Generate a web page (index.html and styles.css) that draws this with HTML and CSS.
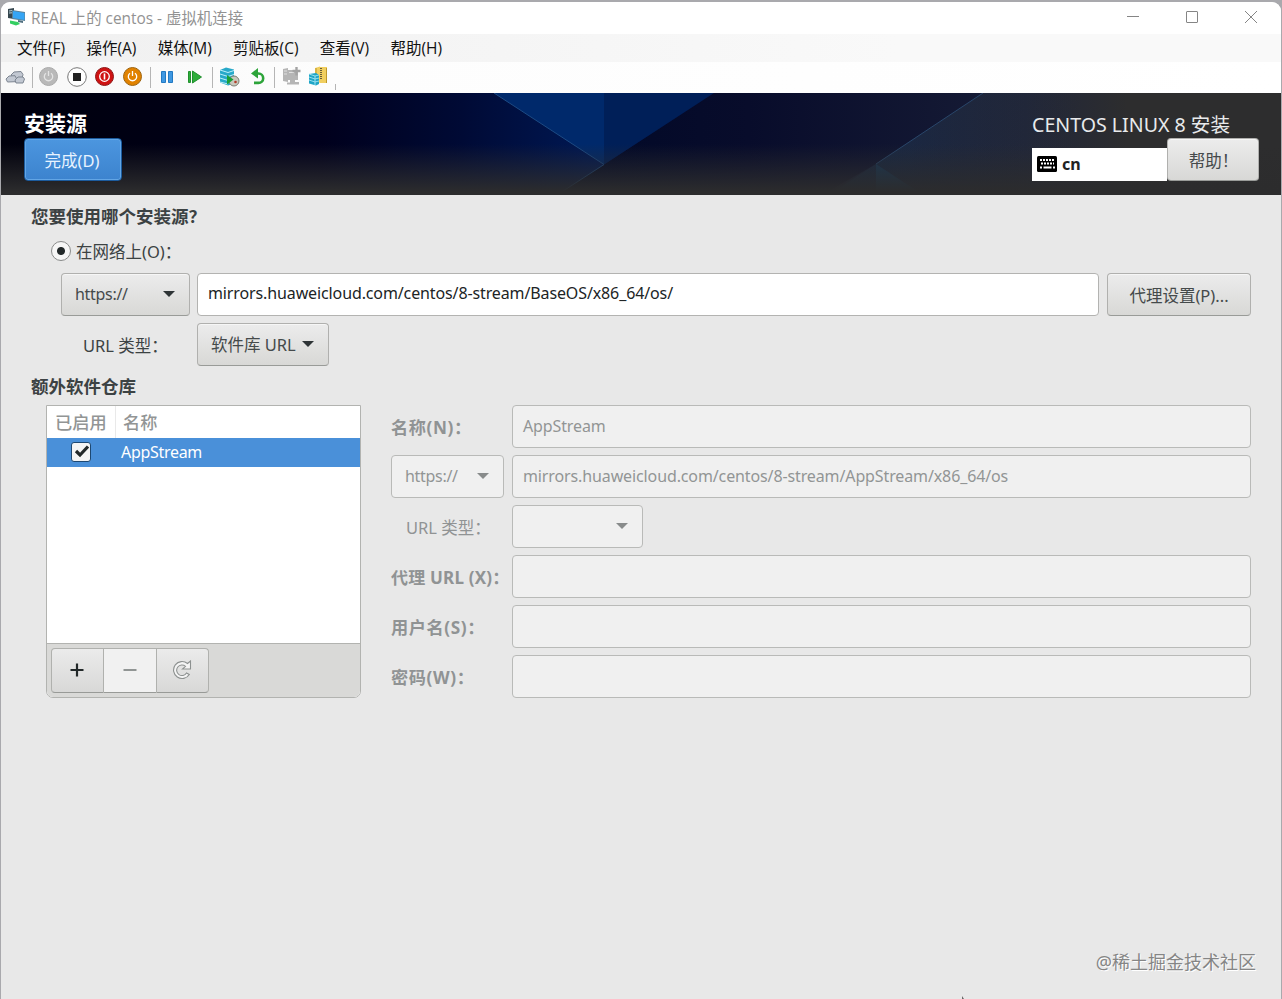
FILE: index.html
```html
<!DOCTYPE html>
<html lang="zh-CN">
<head>
    <meta charset="UTF-8">
    <meta name="viewport" content="width=device-width, initial-scale=1.0">
    <title>REAL 上的 centos - 虚拟机连接</title>
    <link rel="stylesheet" href="styles.css">
</head>
<body>
    <div class="window">
        <div class="titlebar">
            <svg class="app-icon" width="18" height="18" viewBox="0 0 18 18">
                <path d="M0 1l6-1v11l-6-1z" fill="#37474f"/>
                <path d="M1 3l3-.4M1 5l3-.2" stroke="#b8d4de"/>
                <path d="M4 2l13 2v9L4 11z" fill="#5a8299"/>
                <path d="M5 3l11.500 2v7L5 10z" fill="#35a5f5"/>
                <path d="M10 12l5 1v2l-5-1z" fill="#527080"/>
                <path d="M2 12.500l8 1.500 2 2-4 1.500-6-2z" fill="#35cf62"/>
            </svg>
            <span class="title-text">REAL 上的 centos - 虚拟机连接</span>
            <div class="window-buttons">
                <svg width="12" height="12" viewBox="0 0 12 12"><path d="M0 5.500h12"/></svg>
                <svg width="12" height="12" viewBox="0 0 12 12"><rect x=".5" y=".5" width="11" height="11" rx=".5"/></svg>
                <svg width="12" height="12" viewBox="0 0 12 12"><path d="M0 0l12 12M12 0L0 12"/></svg>
            </div>
        </div>

        <div class="menubar">
            <span>文件(F)</span>
            <span>操作(A)</span>
            <span>媒体(M)</span>
            <span>剪贴板(C)</span>
            <span>查看(V)</span>
            <span>帮助(H)</span>
        </div>

        <div class="toolbar">
            <svg width="335" height="31" viewBox="0 0 335 31">
                <!-- Ctrl+Alt+Del -->
                <g fill="#c2c8d2" stroke="#7d8591">
                    <path d="M10 13l3-3 7-.5 2 3-1 4-8 .5z"/>
                    <path d="M5 17l3-3 6-.3 1.500 3-1 3-8 .3z"/>
                    <path d="M14 18l3-3 5 0 1.500 2-1.500 4-7 0z"/>
                </g>
                <g stroke="#b5b5b5">
                    <path d="M31.500 5v21M149.500 5v21M211.500 5v21M273.500 5v21"/>
                    <path d="M334.500 22v6"/>
                </g>
                <!-- power buttons -->
                <circle cx="47.500" cy="14.500" r="9" fill="#b9b9b9" stroke="#aaa"/>
                <circle cx="76" cy="15" r="9.300" fill="#fff" stroke="#777"/>
                <rect x="72" y="11" width="8" height="8" fill="#222"/>
                <circle cx="103.500" cy="14.500" r="9" fill="#cf1212" stroke="#8e1717"/>
                <circle cx="131.500" cy="14.500" r="9" fill="#e18200" stroke="#9e640f"/>
                <g fill="none" stroke="#fff" stroke-width="1.300">
                    <path d="M45 11.200a4.200 4.200 0 1 0 5 0M47.500 9v5" stroke="#e4e4e4"/>
                    <circle cx="103.500" cy="14.500" r="4.800"/>
                    <path d="M103.500 11.500v6" stroke-width="1.600"/>
                    <path d="M129 11.200a4.200 4.200 0 1 0 5 0M131.500 9v5"/>
                </g>
                <!-- pause, resume -->
                <path d="M160.500 9.500h4v11h-4zM167.500 9.500h4v11h-4z" fill="#3f98e2" stroke="#2279c2"/>
                <path d="M187.500 9.500h2v11h-2zM191.500 9l9 6-9 6z" fill="#2eae3b" stroke="#21902e"/>
                <!-- checkpoint, revert -->
                <path d="M219 8l6-2.500 8 2v14l-6 2-8-3z" fill="#28a9c9"/>
                <path d="M219 8l8 2.500 6-2M219 12l8 2.500 6-2M219 16l8 2.500 6-2M219 20l8 2" fill="none" stroke="#bdeffa"/>
                <circle cx="233" cy="19" r="5" fill="#c8c8bd" stroke="#7b7e73"/>
                <path d="M226 13l6.500 4.500-6.500 5z" fill="#19a036"/>
                <circle cx="234.500" cy="20" r="1.300" fill="#b33d28"/>
                <path d="M255 11.500h2.500a4.700 4.700 0 0 1 0 9.400H253" fill="none" stroke="#2da43a" stroke-width="2.600"/>
                <path d="M250 11.500l7-5.500v10.500z" fill="#2da43a"/>
                <!-- enhanced session, share -->
                <path d="M282 7l5-1v14l-5-1zM286 8h11v10h-11zM289 18h5v2h4v2.500h-12v-2h3z" fill="#b5b5b5"/>
                <path d="M283 9h3M283 12h3M288 10.500h5" stroke="#e0e0e0"/>
                <path d="M295.500 5v8.500M291.500 9h8" stroke="#a3a3a3" stroke-width="2.400"/>
                <path d="M314 6l5-1.500v16l-5 1zM319 5h7v16h-7z" fill="#f1cf60"/>
                <path d="M315 6v15M325.500 6v15" stroke="#bd982c"/>
                <path d="M320 6v11" stroke="#685c39" stroke-width="2" stroke-dasharray="1 1"/>
                <path d="M308 12l7-1 3 2v9l-3 1.500-7-2z" fill="#1fa5c7"/>
                <path d="M308 12l6 2 4-1M308 15l6 2 4-1M308 18l6 2 4-1M314 14v9" fill="none" stroke="#b1ecf6" stroke-width=".8"/>
            </svg>
        </div>

        <div class="banner">
            <svg class="banner-art" viewBox="0 0 1280 102" width="1280" height="102">
                <defs>
                    <linearGradient id="base">
                        <stop offset="0" stop-color="#00000c"/>
                        <stop offset=".25" stop-color="#00001c"/>
                        <stop offset=".36" stop-color="#000a35"/>
                        <stop offset=".47" stop-color="#001955"/>
                        <stop offset=".55" stop-color="#060b2c"/>
                        <stop offset=".6" stop-color="#121731"/>
                        <stop offset=".7" stop-color="#182140"/>
                        <stop offset=".8" stop-color="#20263a"/>
                        <stop offset=".88" stop-color="#2d2d2e"/>
                    </linearGradient>
                    <linearGradient id="dark">
                        <stop offset="0" stop-color="#000827"/>
                        <stop offset=".45" stop-color="#080c2b"/>
                        <stop offset="1" stop-color="#151a34"/>
                    </linearGradient>
                    <linearGradient id="fade" x2="0" y2="1">
                        <stop offset=".5" stop-color="#2c2c2d" stop-opacity="0"/>
                        <stop offset=".97" stop-color="#2c2c2d"/>
                    </linearGradient>
                    <linearGradient id="side">
                        <stop offset="0" stop-color="#14304f"/>
                        <stop offset="1" stop-color="#2d2d2e" stop-opacity="0"/>
                    </linearGradient>
                </defs>
                <path d="M0 0h1280v102H0z" fill="url(#base)"/>
                <path d="M713 0L603 71.500 556 102h265L875 71 982 0z" fill="url(#dark)"/>
                <path d="M493 0h110v71.500z" fill="#00296b"/>
                <path d="M603 0h110L603 71.500z" fill="#001f58"/>
                <path d="M493 0l110 71.500L556 102" fill="none" stroke="#1c4b84"/>
                <path d="M982 0L875 71l-55 36h260V0z" fill="url(#side)" opacity=".65"/>
                <path d="M982 0L875 71" stroke="#29466a"/>
                <path d="M875 71l55 36h-55z" fill="#174268" opacity=".6"/>
                <path d="M0 0h1280v102H0z" fill="url(#fade)"/>
            </svg>
            <div class="banner-left">
                <div class="spoke-title">安装源</div>
                <button class="btn btn-done">完成(D)</button>
            </div>
            <div class="banner-right">
                <div class="product">CENTOS LINUX 8 安装</div>
                <div class="banner-controls">
                    <div class="keyboard">
                        <svg width="20" height="16" viewBox="0 0 20 16">
                            <rect width="20" height="16" rx="1.500"/>
                            <path d="M3 4h14M4 7.500h13" stroke="#fff" stroke-width="2" stroke-dasharray="2 1"/>
                            <path d="M3 11.500h2M6.500 11.500h8M16 11.500h2" stroke="#fff" stroke-width="2"/>
                        </svg>
                        <span>cn</span>
                    </div>
                    <button class="btn btn-help">帮助！</button>
                </div>
            </div>
        </div>

        <div class="content">
            <h2>您要使用哪个安装源？</h2>
            <div class="radio-row">
                <span class="radio"></span>
                <span>在网络上(O)：</span>
            </div>
            <div class="network-row">
                <div class="btn combo combo-protocol"><span class="latin">https://</span><i class="arrow"></i></div>
                <div class="entry entry-main">mirrors.huaweicloud.com/centos/8-stream/BaseOS/x86_64/os/</div>
                <button class="btn btn-proxy">代理设置(P)...</button>
            </div>
            <div class="type-row">
                <span class="type-label">URL 类型：</span>
                <div class="btn combo combo-type"><span>软件库 URL</span><i class="arrow"></i></div>
            </div>
            <h2 class="repo-heading">额外软件仓库</h2>

            <div class="repos">
                <div class="repo-list">
                    <div class="list-head">
                        <span class="col-enabled">已启用</span>
                        <span class="col-name">名称</span>
                    </div>
                    <div class="list-row">
                        <span class="check">
                            <svg width="18" height="18" viewBox="0 0 18 18"><path d="M4 8l4 4 8-8.500" fill="none" stroke="#222829" stroke-width="3.200"/></svg>
                        </span>
                        <span class="latin">AppStream</span>
                    </div>
                    <div class="list-space"></div>
                    <div class="list-tools">
                        <div class="tool">
                            <svg width="14" height="14" viewBox="0 0 14 14"><path d="M7 .5v13M.5 7h13" stroke="#222829" stroke-width="2.200"/></svg>
                        </div>
                        <div class="tool tool-off">
                            <svg width="14" height="14" viewBox="0 0 14 14"><path d="M.5 7h13" stroke="#919594" stroke-width="1.800"/></svg>
                        </div>
                        <div class="tool">
                            <svg width="20" height="20" viewBox="0 0 20 20">
                                <path d="M15.500 3.500L18.500 1v8h-8l3-2.700A5.300 5.300 0 1 0 14.500 13l2.800 1.500A8.500 8.500 0 1 1 15.500 3.500z" fill="#f4f4f4" stroke="#8d9190" stroke-width="1.100"/>
                            </svg>
                        </div>
                    </div>
                </div>

                <div class="repo-form">
                    <label>名称(N)：</label>
                    <div class="entry off">AppStream</div>
                    <div class="combo off"><span class="latin">https://</span><i class="arrow"></i></div>
                    <div class="entry off">mirrors.huaweicloud.com/centos/8-stream/AppStream/x86_64/os</div>
                    <label class="plain">URL 类型：</label>
                    <div class="combo off combo-empty"><i class="arrow"></i></div>
                    <label class="lb-proxy">代理 URL (X)：</label>
                    <div class="entry off"></div>
                    <label>用户名(S)：</label>
                    <div class="entry off"></div>
                    <label>密码(W)：</label>
                    <div class="entry off"></div>
                </div>
            </div>
        </div>
        <div class="watermark">@稀土掘金技术社区</div>
        <svg class="cursor" width="5" height="3" viewBox="0 0 5 3"><path d="M1 0l2 3H1z" fill="#666"/></svg>
    </div>
</body>
</html>
```
FILE: styles.css
```css
* {
    box-sizing: border-box;
}

body {
    margin: 0;
    height: 999px;
    padding: 2px 1px 0;
    overflow: hidden;
    background-color: #a9a9ad;
    font-family: "Noto Sans", "Noto Sans CJK SC", sans-serif;
    font-size: 16.5px;
    color: #3c4243;
}

.window {
    position: relative;
    height: 997px;
    display: flex;
    flex-direction: column;
    overflow: hidden;
    border-radius: 9px 9px 0 0;
    background-color: #e8e8e8;
    white-space: nowrap;
}

svg {
    display: block;
    flex: none;
}

/* 标题栏 */
.titlebar {
    height: 32px;
    flex: none;
    display: flex;
    align-items: center;
    padding: 0 24px 2px 7px;
    background-color: #fff;
    font-family: "Open Sans", "Noto Sans CJK SC", sans-serif;
    font-size: 15.4px;
    color: #929292;
}

.title-text {
    margin-left: 5px;
}

.window-buttons {
    display: flex;
    gap: 47px;
    margin-left: auto;
    fill: none;
    stroke: #858585;
}

/* 菜单 */
.menubar {
    height: 28px;
    flex: none;
    display: flex;
    align-items: center;
    gap: 21.3px;
    padding: 0 0 1px 16px;
    background: linear-gradient(90deg, #f0f0f0, #f9f9f9 70%);
    font-family: "Open Sans", "Noto Sans CJK SC", sans-serif;
    font-size: 15.5px;
    color: #111;
}

.toolbar {
    height: 31px;
    flex: none;
    background: linear-gradient(90deg, #f8f8f8, #fdfdfd 335px, #fff);
}

/* 顶部横幅 */
.banner {
    position: relative;
    height: 102px;
    flex: none;
    display: flex;
    justify-content: space-between;
    padding: 17px 22px 0 23px;
}

.banner-art {
    position: absolute;
    left: 0;
    top: 0;
}

.banner-left,
.banner-right {
    position: relative;
}

.spoke-title {
    height: 28px;
    line-height: 27px;
    font-size: 21px;
    font-weight: bold;
    color: #fff;
}

.product {
    height: 28px;
    line-height: 30px;
    font-size: 19.6px;
    color: #e8eaec;
}

.banner-controls {
    display: flex;
}

.keyboard {
    display: flex;
    align-items: center;
    gap: 5px;
    width: 135px;
    height: 33px;
    margin-top: 10px;
    padding: 0 0 2px 5px;
    background-color: #fff;
    color: #222;
    font-weight: bold;
    font-size: 16px;
}

.btn {
    height: 43px;
    padding: 0;
    border: 1px solid #b0b0ae;
    border-bottom-color: #999b98;
    border-radius: 4px;
    background: linear-gradient(#ececec, #d8d8d6);
    box-shadow: inset 0 1px #f6f6f6;
    font: inherit;
    color: #454a4b;
}

.btn-done {
    width: 98px;
    padding-right: 2px;
    border-color: #1c5b9d;
    background: linear-gradient(#4c96df, #3c83ce);
    box-shadow: inset 0 0 0 1px #62a5e5;
    color: #e8f3ff;
}

.btn-help {
    width: 92px;
    padding-left: 1px;
}

/* 安装源 */
.content {
    padding: 7px 30px 0;
}

h2 {
    margin: 0;
    height: 28px;
    line-height: 28px;
    font-size: 17.5px;
    font-weight: bold;
}

.radio-row {
    display: flex;
    align-items: center;
    gap: 5px;
    height: 43px;
    padding: 0 0 2px 20px;
}

.radio {
    width: 20px;
    height: 20px;
    border: 1px solid #898b8a;
    border-radius: 50%;
    background: radial-gradient(circle, #222829 3.5px, #f6f6f6 4.5px);
}

.network-row {
    display: flex;
    gap: 8px;
    padding-left: 30px;
}

.combo {
    display: flex;
    align-items: center;
    justify-content: space-between;
    padding: 0 14px 1px 13px;
}

.combo-protocol {
    width: 129px;
    margin-right: -1px;
}

.arrow {
    width: 0;
    border: 6px solid transparent;
    border-top-color: #2e3436;
    border-bottom: 0;
}

.latin {
    font-size: 16px;
    letter-spacing: -0.3px;
}

.entry {
    height: 43px;
    padding: 0 10px 3px;
    line-height: 38px;
    border: 1px solid #b3b3b1;
    border-radius: 4px;
    background-color: #fff;
    color: #202425;
    font-size: 16px;
    letter-spacing: -0.12px;
}

.entry-main {
    flex: 1;
}

.btn-proxy {
    width: 144px;
}

.type-row {
    display: flex;
    align-items: center;
    margin-top: 7px;
}

.type-label {
    width: 166px;
    padding-left: 52px;
}

.combo-type {
    width: 132px;
}

.repo-heading {
    margin-top: 6px;
}

/* 软件仓库 */
.repos {
    display: flex;
    gap: 30px;
    margin-top: 5px;
    padding-left: 15px;
}

.repo-list {
    width: 315px;
    height: 293px;
    flex: none;
    display: flex;
    flex-direction: column;
    overflow: hidden;
    border: 1px solid #b2b3b0;
    border-radius: 0 0 7px 7px;
    background-color: #fff;
}

.list-head {
    display: flex;
    height: 32px;
    line-height: 34px;
    font-size: 17.2px;
    font-weight: 500;
    color: #929595;
}

.col-enabled {
    width: 69px;
    padding-left: 8px;
    border-right: 1px solid #e9e9e9;
}

.col-name {
    padding-left: 7px;
}

.list-row {
    display: flex;
    align-items: center;
    gap: 30px;
    height: 29px;
    padding: 0 0 1px 24px;
    background-color: #4a90d9;
    color: #fff;
}

.check {
    width: 20px;
    height: 20px;
    border: 1px solid #1d4872;
    border-radius: 3px;
    background-color: #f4f4f4;
}

.list-space {
    flex: 1;
}

.list-tools {
    display: flex;
    height: 54px;
    padding: 4px;
    border-top: 1px solid #b2b3b0;
    background-color: #d9d9d7;
}

.tool {
    display: flex;
    align-items: center;
    justify-content: center;
    width: 53px;
    height: 45px;
    padding: 0 1px 1px 0;
    border: 1px solid #b0b1ae;
    border-bottom-color: #989a97;
    background: linear-gradient(#ebebeb, #d8d8d7);
}

.tool:first-child {
    border-radius: 4px 0 0 4px;
}

.tool:last-child {
    border-radius: 0 4px 4px 0;
}

.tool-off {
    width: 52px;
    border-left: 0;
    border-right: 0;
    background: #f1f1f1;
}

.repo-form {
    flex: 1;
    display: grid;
    grid-template-columns: 113px 1fr;
    grid-auto-rows: 43px;
    gap: 7px 8px;
    color: #909394;
}

.repo-form label {
    line-height: 46px;
    font-size: 17.2px;
    font-weight: bold;
    letter-spacing: 0.6px;
}

.repo-form .lb-proxy {
    font-size: 17px;
    letter-spacing: 0.2px;
}

.repo-form .plain {
    padding-left: 15px;
    font-size: 16.5px;
    font-weight: normal;
    letter-spacing: 0;
}

.off {
    border: 1px solid #b9bab8;
    border-radius: 4px;
    background-color: #f0f0f0;
    color: #929595;
}

.repo-form .entry {
    line-height: 40px;
}

.off .arrow {
    border-top-color: #888b8b;
}

.combo-empty {
    width: 131px;
    justify-content: flex-end;
}

/* 水印 */
.watermark {
    margin: auto 25px 25px auto;
    font-size: 18px;
    color: #858585;
    text-shadow: 1px 1px #fff;
}

/* 鼠标指针 */
.cursor {
    position: absolute;
    left: 960px;
    bottom: 0;
}
```
